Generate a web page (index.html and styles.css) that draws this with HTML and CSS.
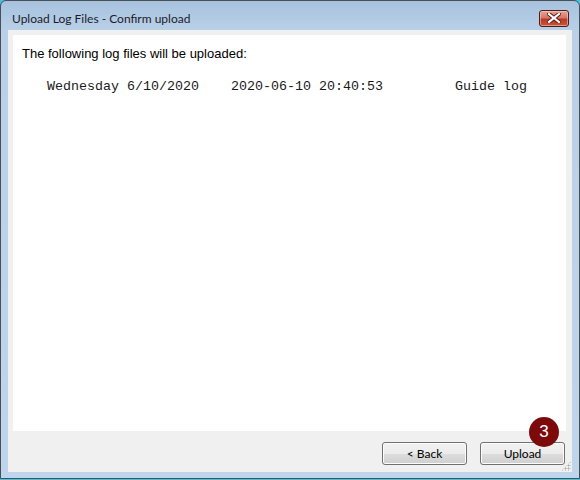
FILE: index.html
```html
<!DOCTYPE html>
<html lang="en">
<head>
    <meta charset="UTF-8">
    <title>Upload Log Files - Confirm upload</title>
    <link rel="stylesheet" href="styles.css">
</head>
<body>
    <div class="window">
        <div class="titlebar">
            <span class="title">Upload Log Files - Confirm upload</span>
            <button class="close" title="Close">
                <svg width="14" height="10" viewBox="0 0 14 10">
                    <path d="M2 1 L12 9 M12 1 L2 9" stroke="#5a1a14" stroke-width="4" stroke-linecap="square"/>
                    <path d="M2 1 L12 9 M12 1 L2 9" stroke="#fff" stroke-width="2.2" stroke-linecap="square"/>
                </svg>
            </button>
        </div>

        <div class="client">
            <div class="panel">
                <p class="intro">The following log files will be uploaded:</p>
                <pre class="files">Wednesday 6/10/2020    2020-06-10 20:40:53         Guide log</pre>
            </div>

            <div class="footer">
                <button class="btn">&lt; Back</button>
                <div class="btn-wrap">
                    <button class="btn">Upload</button>
                    <span class="step">3</span>
                </div>
            </div>
            <div class="grip"></div>
        </div>
    </div>
</body>
</html>
```

FILE: styles.css
```css
body {
    margin: 0;
    background: #3cc6e0;
    font-family: "Liberation Sans", Arial, sans-serif;
    font-size: 12px;
}

.window {
    box-sizing: border-box;
    width: 580px;
    height: 479px;
    border: 1px solid #4a4f57;
    border-radius: 6px 6px 0 0;
    background: linear-gradient(to bottom, #a8c2de 0, #b9d0e8 30px, #bfd5ec 100%);
    padding: 0 7px 6px 7px;
    display: flex;
    flex-direction: column;
}

.titlebar {
    height: 29px;
    box-sizing: border-box;
    padding: 5px 3px 0 4px;
    display: flex;
    align-items: center;
    justify-content: space-between;
}

.title {
    color: #1b1b2a;
    font-family: Lato, "Noto Sans", sans-serif;
    font-size: 12px;
}

.close {
    width: 30px;
    height: 17px;
    padding: 0;
    border: 1px solid #4b1d1a;
    border-radius: 3px;
    background: linear-gradient(to bottom, #e8a493 0, #d4776a 45%, #bb3a25 55%, #c8553a 100%);
    box-shadow: inset 0 0 0 1px rgba(255, 220, 210, 0.5);
    display: flex;
    align-items: center;
    justify-content: center;
}

.client {
    flex: 1;
    position: relative;
    background: #f0f0f0;
    padding: 5px 6px 0 5px;
    display: flex;
    flex-direction: column;
}

.panel {
    background: #fff;
    height: 396px;
    padding: 10px 9px;
    box-sizing: border-box;
}

.intro {
    margin: 0;
    padding-top: 1px;
    color: #000;
    font-family: "Liberation Sans", Arial, sans-serif;
    font-size: 13px;
}

.files {
    margin: 18px 0 0 25px;
    font-family: "Liberation Mono", "Courier New", monospace;
    font-size: 13.33px;
    color: #1a1a1a;
}

.footer {
    display: flex;
    justify-content: flex-end;
    gap: 13px;
    padding-top: 11px;
    padding-right: 1px;
}

.btn-wrap {
    position: relative;
}

.btn {
    width: 85px;
    height: 23px;
    border: 1px solid #707070;
    border-radius: 3px;
    background: linear-gradient(to bottom, #f2f2f2 0, #ebebeb 50%, #dddddd 51%, #cfcfcf 100%);
    box-shadow: inset 0 0 0 1px #fcfcfc;
    font-family: Lato, "Noto Sans", sans-serif;
    font-size: 12px;
    color: #000;
    padding: 0;
}

.step {
    position: absolute;
    left: 49px;
    top: -25px;
    width: 30px;
    height: 30px;
    border-radius: 50%;
    background: #7d0a0a;
    color: #fff;
    font-family: "Liberation Sans", Arial, sans-serif;
    font-size: 17px;
    line-height: 30px;
    text-align: center;
}

.grip {
    position: absolute;
    right: 1px;
    bottom: 1px;
    width: 10px;
    height: 10px;
    background:
        radial-gradient(circle, #a8a8a8 0.8px, transparent 1.2px) 0 0 / 3px 3px;
    clip-path: polygon(100% 0, 100% 100%, 0 100%);
}
```
